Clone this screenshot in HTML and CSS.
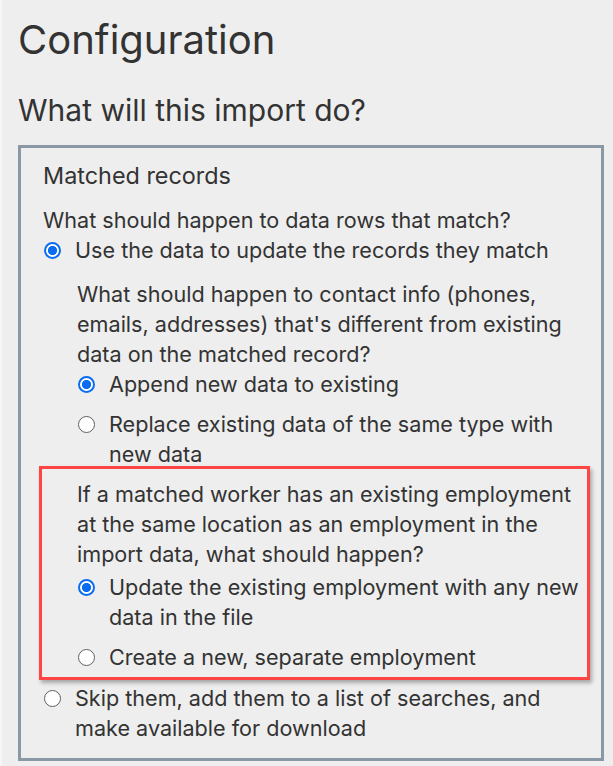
FILE: index.html
```html
<!DOCTYPE html>
<html lang="en">
<head>
<meta charset="utf-8">
<title>Configuration</title>
<link rel="stylesheet" href="styles.css">
</head>
<body>
<div class="page">
  <h1 class="title">Configuration</h1>
  <h2 class="subtitle">What will this import do?</h2>
  <div class="box">
    <div class="box-title">Matched records</div>
    <p class="question q-first">What should happen to data rows that match?</p>
    <label class="option">
      <input type="radio" name="match" checked>
      <span>Use the data to update the records they match</span>
    </label>
    <div class="nested">
      <p class="question">What should happen to contact info (phones, emails, addresses) that's different from existing data on the matched record?</p>
      <label class="option">
        <input type="radio" name="contact" checked>
        <span>Append new data to existing</span>
      </label>
      <label class="option option-gap">
        <input type="radio" name="contact">
        <span>Replace existing data of the same type with new data</span>
      </label>
    </div>
    <div class="highlight">
      <p class="question">If a matched worker has an existing employment at the same location as an employment in the import data, what should happen?</p>
      <label class="option option-tight">
        <input type="radio" name="employment" checked>
        <span>Update the existing employment with any new data in the file</span>
      </label>
      <label class="option option-gap">
        <input type="radio" name="employment">
        <span>Create a new, separate employment</span>
      </label>
    </div>
    <label class="option option-skip">
      <input type="radio" name="match">
      <span>Skip them, add them to a list of searches, and make available for download</span>
    </label>
  </div>
</div>
</body>
</html>
```

FILE: styles.css
```css
html, body {
  margin: 0;
  padding: 0;
  background: #f6f6f6;
}

body {
  font-family: Inter, "Noto Sans", sans-serif;
  color: #333333;
}

.page {
  margin-left: 2px;
  background: #eeeeee;
  padding: 12px 9px 6px 16px;
  min-height: 766px;
  box-sizing: border-box;
}

.title {
  margin: 0;
  font-size: 40px;
  font-weight: 400;
  line-height: 56px;
}

.subtitle {
  margin: 22px 0 0;
  font-size: 30px;
  font-weight: 400;
  line-height: 40px;
}

.box {
  margin-top: 15px;
  border: 3px solid #8a98a5;
  padding: 13px 22px 15px 22px;
  font-size: 21.6px;
  line-height: 30px;
}

.box-title {
  font-size: 23.4px;
  line-height: 30px;
}

.question {
  margin: 0;
}

.q-first {
  margin-top: 14px;
}

.option {
  display: flex;
  align-items: flex-start;
  gap: 14px;
}

.option input {
  appearance: none;
  -webkit-appearance: none;
  flex: none;
  box-sizing: border-box;
  width: 17px;
  height: 17px;
  margin: 7px 0 0 1px;
  border: 1.5px solid #5f5f5f;
  border-radius: 50%;
  background: #ffffff;
}

.option input:checked {
  border: 2px solid #0a6cf0;
  background: radial-gradient(circle, #0a6cf0 0 4.3px, #ffffff 4.8px);
}

.option-gap {
  margin-top: 10px;
}

.option-tight {
  margin-top: 3px;
}

.nested {
  margin-top: 14px;
  padding-left: 34px;
}

.highlight {
  margin: -3px -11px 0 -4px;
  border: 3px solid #ff4444;
  padding: 10px 0 5px 35px;
  box-shadow: 2px 3px 4px rgba(0, 0, 0, 0.3);
}

.option-skip {
  margin-top: 3px;
}
```
